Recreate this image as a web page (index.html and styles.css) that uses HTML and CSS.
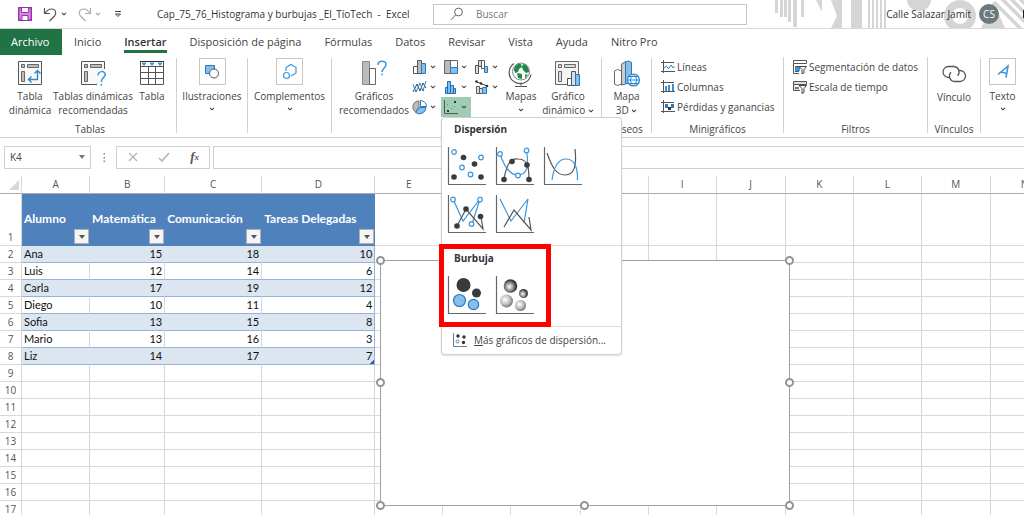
FILE: index.html
```html
<!DOCTYPE html>
<html lang="es">
<head>
<meta charset="utf-8">
<title>Cap_75_76_Histograma y burbujas _El_TíoTech - Excel</title>
<link rel="stylesheet" href="styles.css">
</head>
<body>
<svg class="defs" aria-hidden="true">
  <defs>
    <symbol id="chev" viewBox="0 0 6 4"><path d="M1 .8l2 2 2-2" fill="none" stroke="#444" stroke-width="1.1"/></symbol>
    <symbol id="axes" viewBox="0 0 40 40"><path d="M1.500 1v37.500H39" fill="none" stroke="#666" stroke-width="1.200"/></symbol>
    <radialGradient id="dark" cx=".42" cy=".55" r=".6"><stop offset="0" stop-color="#fff"/><stop offset=".45" stop-color="#999"/><stop offset=".8" stop-color="#3c3c3c"/><stop offset="1" stop-color="#333"/></radialGradient>
    <radialGradient id="light" cx=".4" cy=".4" r=".65"><stop offset="0" stop-color="#fff"/><stop offset=".5" stop-color="#c8c8c8"/><stop offset="1" stop-color="#6e6e6e"/></radialGradient>
  </defs>
</svg>

<header class="titlebar">
  <svg class="art" width="250" height="28" viewBox="0 0 250 28" aria-hidden="true">
    <g fill="#d5d5d5">
      <path d="M1 0h3v13h-3zM6 0h3v17h-3zM10 0h3v17h-3zM19 0h4v27h-4zM27 0h3v17h-3zM14 0h3v22h-3zM42 0h6v12zM57 0h11v28h-11l6-12zM77 0h11v28h-11z"/>
      <path d="M94 0h2v28h-2zM98 0h2v28h-2zM102 0h2v28h-2zM106 0h2v28h-2zM110 0h2v28h-2zM133 0h24a12 11 0 0 1-24 0z"/>
      <path d="M207 28l12-26 12 26z"/>
    </g>
    <circle cx="186" cy="16" r="12" fill="none" stroke="#d5d5d5" stroke-width="8"/>
    <path d="M225 -4l32 32M234 -4l32 32M243 -4l32 32M220 2l32 32" stroke="#d5d5d5" stroke-width="3.500"/>
  </svg>
  <div class="quick">
    <button class="plain" aria-label="Guardar"><svg width="14" height="14" viewBox="0 0 14 14"><path d="M.7.700h12.600v12.600H.7z" fill="#d58add" stroke="#9b2fae" stroke-width="1.400"/><path d="M3.500 1v4.500h7V1M4 13V8.500h6V13" fill="#fff" stroke="#9b2fae"/></svg></button>
    <button class="plain" aria-label="Deshacer"><svg width="15" height="15" viewBox="0 0 15 15"><path d="M1.500 1v5.500H7M1.800 6.200C4 3.500 6 2 8.500 2c4 0 5.500 4 3 7L6.500 14" fill="none" stroke="#555" stroke-width="1.200"/></svg></button>
    <button class="plain" aria-label="Opciones de deshacer"><svg width="6" height="4"><use href="#chev"/></svg></button>
    <button class="plain redo" aria-label="Rehacer"><svg width="15" height="15" viewBox="0 0 15 15"><path d="M13.500 1v5.500H8M13.200 6.200C11 3.500 9 2 6.500 2c-4 0-5.500 4-3 7L8.500 14" fill="none" stroke="#aaa" stroke-width="1.200"/></svg></button>
    <button class="plain" aria-label="Opciones de rehacer"><svg width="6" height="4" opacity=".5"><use href="#chev"/></svg></button>
    <button class="plain more" aria-label="Personalizar"><svg width="8" height="8" viewBox="0 0 8 8"><path d="M1 1.500h6M1.500 4h5L4 6.500z" fill="none" stroke="#444"/></svg></button>
  </div>
  <h1 class="doc">Cap_75_76_Histograma y burbujas _El_TíoTech&nbsp; -&nbsp; Excel</h1>
  <label class="search"><svg width="14" height="14" viewBox="0 0 14 14"><circle cx="8.500" cy="5" r="3.900" fill="none" stroke="#666"/><path d="M5.700 7.800L1 12.800" stroke="#666"/></svg><input type="search" placeholder="Buscar" aria-label="Buscar"></label>
  <div class="user"><span>Calle Salazar Jamit</span><span class="avatar">CS</span></div>
  <svg class="winbtn" width="4" height="10" viewBox="0 0 4 10" aria-hidden="true"><path d="M3.500 1v8" stroke="#222"/></svg>
</header>

<nav class="tabs">
  <button class="tab file">Archivo</button>
  <button class="tab">Inicio</button>
  <button class="tab active">Insertar</button>
  <button class="tab">Disposición de página</button>
  <button class="tab">Fórmulas</button>
  <button class="tab">Datos</button>
  <button class="tab">Revisar</button>
  <button class="tab">Vista</button>
  <button class="tab">Ayuda</button>
  <button class="tab">Nitro Pro</button>
</nav>

<section class="ribbon">
  <div class="group g-tables">
    <div class="items">
      <button class="big w52"><svg width="26" height="26" viewBox="0 0 26 26"><path d="M1.500 1.500h23v23h-23z" fill="#f8f8f8" stroke="#555"/><path d="M4.500 4.500h3v3h-3zM10.500 4.500h11v3h-11zM4.500 11.500h3v10h-3z" fill="#bbb" stroke="#666"/><path d="M12 19.500h8.500V11M17.500 13.500l3-3 3 3M14.500 16.500l-3 3 3 3" fill="none" stroke="#2b88d0" stroke-width="1.400"/></svg><span>Tabla<br>dinámica</span></button>
      <button class="big w76"><svg width="26" height="26" viewBox="0 0 26 26"><path d="M1.500 1.500h23v23h-23z" fill="#f8f8f8"/><path d="M24.500 9V1.500h-23v23H17" fill="none" stroke="#555"/><path d="M4.500 4.500h3v3h-3zM10.500 4.500h11v3h-11zM4.500 11.500h3v10h-3z" fill="#bbb" stroke="#666"/><path d="M18.500 16c0-5 7-5 7-1 0 3-4 3-4 7" fill="none" stroke="#fff" stroke-width="4"/><path d="M18 15.500c0-5 7.300-5 7.300-1 0 3-4 3-4 7.500M21.300 24v1.800" fill="none" stroke="#3a96dd" stroke-width="1.500"/></svg><span>Tablas dinámicas<br>recomendadas</span></button>
      <button class="big w40"><svg width="26" height="26" viewBox="0 0 26 26"><path d="M1.500 1.500h23v23h-23zM1.500 6.500h23M1.500 12.500h23M1.500 18.500h23M9.500 6.500v18M16.500 6.500v18" fill="none" stroke="#555"/><path d="M2 2h22v4H2z" fill="#fff"/><path d="M1 1.500h24" stroke="#333"/><path d="M3 3h4L5 5.500zM11 3h4l-2 2.500zM19 3h4l-2 2.500z" fill="#3a96dd" stroke="#3a96dd"/></svg><span>Tabla</span></button>
    </div>
    <div class="caption">Tablas</div>
  </div>
  <div class="group g-illus">
    <button class="boxed"><span class="box"><svg width="18" height="18" viewBox="0 0 18 18"><path d="M2.500 2.500h9v8h-9z" fill="#83beec" stroke="#2b78bb"/><circle cx="11" cy="10.500" r="4.500" fill="#fff" stroke="#555"/></svg></span><span>Ilustraciones</span><svg width="6" height="4"><use href="#chev"/></svg></button>
  </div>
  <div class="group g-addins">
    <button class="boxed"><span class="box"><svg width="18" height="18" viewBox="0 0 18 18"><path d="M5 8V4.500l5-3 5 3v5.500l-5 3" fill="none" stroke="#3a96dd" stroke-width="1.200"/><circle cx="5.500" cy="12.500" r="3" fill="none" stroke="#3a96dd" stroke-width="1.200"/></svg></span><span>Complementos</span><svg width="6" height="4"><use href="#chev"/></svg></button>
  </div>
  <div class="group g-charts">
    <div class="items">
      <button class="big w80"><svg width="26" height="26" viewBox="0 0 26 26"><path d="M1.500 1.500h7v23h-7z" fill="#bbb" stroke="#888"/><path d="M8.500 8.500h6v16h-6z" fill="#fff" stroke="#666"/><path d="M17 5c0-5 8-5 8-.5 0 3.500-4 4-4 7.500M21 13.500v1.800" fill="none" stroke="#3a96dd" stroke-width="1.500"/></svg><span>Gráficos<br>recomendados</span></button>
      <div class="mini">
        <button aria-label="Columnas"><svg width="16" height="16" viewBox="0 0 16 16"><path d="M1.500 7.500h4v7h-4z" fill="#fff" stroke="#555"/><path d="M5.500 1.500h4v13h-4z" fill="#bbb" stroke="#555"/><path d="M9.500 4.500h4v10h-4z" fill="#83beec" stroke="#2b78bb"/></svg><svg width="6" height="4"><use href="#chev"/></svg></button>
        <button aria-label="Jerarquía"><svg width="16" height="16" viewBox="0 0 16 16"><path d="M1.500 1.500h13v13h-13z" fill="#fff" stroke="#666"/><path d="M2 2h5v12H2z" fill="#bbb"/><path d="M7.500 1.500v13" stroke="#666"/><path d="M7.500 8.500h7v6h-7z" fill="#83beec" stroke="#2b78bb"/></svg><svg width="6" height="4"><use href="#chev"/></svg></button>
        <button aria-label="Cascada"><svg width="16" height="16" viewBox="0 0 16 16"><path d="M1.500 6.500h3v8h-3zM4.500 1.500h3v6h-3z" fill="#ddd" stroke="#555"/><path d="M7.500 1.500h3v8h-3z" fill="#fff" stroke="#555"/><path d="M10.500 7.500h3v6h-3z" fill="#83beec" stroke="#2b78bb"/></svg><svg width="6" height="4"><use href="#chev"/></svg></button>
        <button aria-label="Líneas"><svg width="16" height="16" viewBox="0 0 16 16"><path d="M1 13l4-8 3 7 3-8 3 5" fill="none" stroke="#444"/><path d="M1 5l3 8 4-9 3 8 3-10" fill="none" stroke="#2b88d0"/><path d="M3 11h2v2H3zM10 10h2v2h-2z" fill="#2b88d0"/></svg><svg width="6" height="4"><use href="#chev"/></svg></button>
        <button aria-label="Estadística"><svg width="16" height="16" viewBox="0 0 16 16"><path d="M2.500 8.500h2v6h-2zM4.500 2.500h3v12h-3zM7.500 6.500h3v8h-3zM10.500 9.500h2v5h-2z" fill="#83beec" stroke="#1d6fb5"/></svg><svg width="6" height="4"><use href="#chev"/></svg></button>
        <button aria-label="Combinado"><svg width="16" height="16" viewBox="0 0 16 16"><path d="M2.500 7.500h3v7h-3zM5.500 9.500h3v5h-3z" fill="#ddd" stroke="#555"/><path d="M8.500 8.500h4v6h-4z" fill="#83beec" stroke="#2b78bb"/><path d="M2 2.500l5 2 6 2.500" fill="none" stroke="#333"/><circle cx="2.500" cy="2.500" r="1.300" fill="#333"/><circle cx="7" cy="4.500" r="1.300" fill="#333"/><circle cx="13" cy="7" r="1.300" fill="#333"/></svg><svg width="6" height="4"><use href="#chev"/></svg></button>
        <button aria-label="Circular"><svg width="16" height="16" viewBox="0 0 16 16"><path d="M7 2a6 6 0 0 0-3.500 11L7 8z" fill="#bbb" stroke="#777"/><path d="M8.500 1.500V7.500h6a6 6 0 0 0-6-6z" fill="#fff" stroke="#2b78bb"/><path d="M14 8.500H7.500l-4 5A6.500 6.500 0 0 0 14 8.500z" fill="#83beec" stroke="#2b78bb"/></svg><svg width="6" height="4"><use href="#chev"/></svg></button>
        <div class="scatter">
          <button class="pressed" aria-label="Dispersión"><svg width="16" height="16" viewBox="0 0 16 16"><path d="M1.500 1v13.500H15" fill="none" stroke="#555"/><path d="M11 2h2v2h-2zM4 11h2v2H4z" fill="#333"/><path d="M4 5h1v1H4zM8 9h1v1H8zM11 7h1v1h-1z" fill="#3a96dd"/></svg><svg width="6" height="4"><use href="#chev"/></svg></button>
          <div class="menu">
            <h2>Dispersión</h2>
            <div class="gallery">
              <button aria-label="Dispersión simple"><svg width="40" height="40"><use href="#axes"/><g fill="#fff" stroke="#3a96dd" stroke-width="1.200"><circle cx="7" cy="6" r="2.300"/><circle cx="34" cy="11.500" r="2.300"/><circle cx="15" cy="21.500" r="2.300"/><circle cx="23.500" cy="28.500" r="2.300"/></g><g fill="#3a3a3a"><circle cx="16.500" cy="11.500" r="2.800"/><circle cx="27.500" cy="18" r="2.800"/><circle cx="7" cy="31" r="2.800"/><circle cx="34" cy="31" r="2.800"/></g></svg></button>
              <button aria-label="Líneas suavizadas y marcadores"><svg width="40" height="40"><use href="#axes"/><path d="M9 33C11 22 14 12 23 13c8 0 11 5 11 20" fill="none" stroke="#555" stroke-width="1.200"/><path d="M5 8c4 12 9 21 18 21S34 20 31.500 5" fill="none" stroke="#3a96dd" stroke-width="1.200"/><g fill="#fff" stroke="#3a96dd" stroke-width="1.200"><circle cx="5" cy="8" r="2.300"/><circle cx="31.500" cy="4.500" r="2.300"/><circle cx="23" cy="29.500" r="2.300"/></g><g fill="#3a3a3a"><circle cx="9" cy="33.500" r="2.800"/><circle cx="17" cy="15.500" r="2.800"/><circle cx="32" cy="19" r="2.800"/><circle cx="34" cy="33.500" r="2.800"/></g></svg></button>
              <button aria-label="Líneas suavizadas"><svg width="40" height="40"><use href="#axes"/><path d="M4 7c5 14 9 22 18 22S34 20 32 3" fill="none" stroke="#555" stroke-width="1.200"/><path d="M9 34C11 20 15 13 23 13s12 8 11.500 21" fill="none" stroke="#3a96dd" stroke-width="1.200"/></svg></button>
              <button aria-label="Líneas rectas y marcadores"><svg width="40" height="40"><use href="#axes"/><path d="M6 5l10 22L33 5l-8 25" fill="none" stroke="#3a96dd" stroke-width="1.200"/><path d="M10 32l9-17 17 20-2-12" fill="none" stroke="#555" stroke-width="1.200"/><g fill="#fff" stroke="#3a96dd" stroke-width="1.200"><circle cx="6" cy="5.500" r="2.300"/><circle cx="33" cy="5.500" r="2.300"/><circle cx="24.500" cy="30" r="2.300"/></g><g fill="#3a3a3a"><circle cx="10" cy="32" r="2.800"/><circle cx="19" cy="15" r="2.800"/><circle cx="33.500" cy="22.500" r="2.800"/></g></svg></button>
              <button aria-label="Líneas rectas"><svg width="40" height="40"><use href="#axes"/><path d="M5 5l11 22L33 5l-4 24" fill="none" stroke="#3a96dd" stroke-width="1.200"/><path d="M9 33l10-17 17 20-2-13" fill="none" stroke="#555" stroke-width="1.200"/></svg></button>
            </div>
            <div class="bubble">
              <h2>Burbuja</h2>
              <div class="gallery">
                <button aria-label="Burbuja"><svg width="40" height="40"><use href="#axes"/><circle cx="16.500" cy="10" r="7" fill="#3a3a3a"/><circle cx="29.500" cy="18" r="4.500" fill="#3a3a3a"/><circle cx="12.500" cy="25.500" r="6" fill="#83beec" stroke="#2b78bb" stroke-width="1.200"/><circle cx="26.500" cy="29.500" r="5.200" fill="#83beec" stroke="#2b78bb" stroke-width="1.200"/></svg></button>
                <button aria-label="Burbuja 3D"><svg width="40" height="40"><use href="#axes"/><circle cx="15.500" cy="11" r="6.800" fill="url(#dark)"/><circle cx="28.500" cy="18.500" r="4.500" fill="url(#dark)"/><circle cx="11.500" cy="26" r="6.500" fill="url(#light)"/><circle cx="25.500" cy="30.500" r="5.500" fill="url(#light)"/></svg></button>
              </div>
              <div class="highlight"></div>
            </div>
            <button class="moreitem"><svg width="16" height="16" viewBox="0 0 16 16"><path d="M1.500 1v13.500H15" fill="none" stroke="#777"/><g fill="#333"><circle cx="6" cy="4" r="1.700"/><circle cx="12" cy="5" r="1.700"/><circle cx="11.500" cy="10.500" r="1.700"/></g><circle cx="5.500" cy="9.500" r="1.500" fill="#fff" stroke="#3a96dd"/></svg><span><u>M</u>ás gráficos de dispersión...</span></button>
          </div>
        </div>
      </div>
      <button class="big w36 maps"><svg width="26" height="28" viewBox="0 0 26 28"><circle cx="13" cy="11.500" r="8.500" fill="#fff" stroke="#888"/><path d="M6 10c0-4 4-7 7-6l1 3-3 2-1 3-3 1zM15 4c3 0 6 3 6 8l-3 1-3-3-1-3zM9 13l5 1 0 5-4-1zM17 14.500l3 0-3 4z" fill="#1f8a4c"/><path d="M6 3.500a11 11 0 1 0 17 11M13 22.500v3M7 26.500h12" fill="none" stroke="#555" stroke-width="1.200"/></svg><span>Mapas</span><svg class="drop" width="6" height="4"><use href="#chev"/></svg></button>
      <button class="big w58"><svg width="28" height="28" viewBox="0 0 28 28"><path d="M1.500 1.500h23v23h-23z" fill="#f4f4f4" stroke="#666"/><path d="M4.500 4.500h3v3h-3zM10.500 4.500h11v3h-11zM4.500 11.500h3v10h-3z" fill="#ddd" stroke="#666"/><path d="M13.500 18.500h4v7h-4z" fill="#fff" stroke="#555"/><path d="M17.500 11.500h4v14h-4z" fill="#ddd" stroke="#555"/><path d="M21.500 14.500h4v11h-4z" fill="#83beec" stroke="#2b78bb"/></svg><span>Gráfico<br>dinámico <svg width="6" height="4"><use href="#chev"/></svg></span></button>
    </div>
  </div>
  <div class="group g-tours">
    <div class="items">
      <button class="big w48"><svg width="28" height="28" viewBox="0 0 28 28"><path d="M1.500 11l3-1.500 4 1.500v13l-4 1.500-3-1.500z" fill="#fff" stroke="#666"/><path d="M8.500 4l4-2.500V24l-4 1z" fill="#ccc" stroke="#666"/><path d="M12.500 2l3-1 3 1.500V22l-6 2z" fill="#83beec" stroke="#2b78bb"/><circle cx="20.500" cy="20" r="6" fill="#fff" stroke="#2b88d0" stroke-width="1.200"/><path d="M14.500 20h12M16 16.500h9M16 23.500h9M20.500 14c-4 4-4 8 0 12 4-4 4-8 0-12z" fill="none" stroke="#2b88d0"/></svg><span>Mapa<br>3D <svg width="6" height="4"><use href="#chev"/></svg></span></button>
    </div>
    <div class="caption">Paseos</div>
  </div>
  <div class="group g-spark">
    <div class="list">
      <button><svg width="14" height="14" viewBox="0 0 14 14"><path d="M0 2.500h13M0 11.500h14M2.500 0v13" stroke="#555"/><path d="M3 8l2.500-2 2 3 2.500-4 2 3 1.500-2" fill="none" stroke="#2b88d0"/></svg>Líneas</button>
      <button><svg width="14" height="14" viewBox="0 0 14 14"><path d="M0 2.500h13M0 11.500h14M2.500 0v13" stroke="#555"/><path d="M4 6h2v5H4zM7 5h2v6H7zM11 4h2v7h-2z" fill="#3a8fd4"/></svg>Columnas</button>
      <button><svg width="14" height="14" viewBox="0 0 14 14"><path d="M0 2.500h13M0 11.500h14M2.500 0v13" stroke="#555"/><path d="M4 4h3v4H4zM10 4h3v4h-3z" fill="#2b78bb"/><path d="M7 7h3v3H7z" fill="#333"/></svg>Pérdidas y ganancias</button>
    </div>
    <div class="caption">Minigráficos</div>
  </div>
  <div class="group g-filters">
    <div class="list">
      <button><svg width="14" height="14" viewBox="0 0 14 14"><path d="M.5.500h13v3H.5zM.5 3.500v10H6M2 6.500h6M2 11.500h4" fill="none" stroke="#555"/><path d="M2 7h5v4H2z" fill="#3a96dd"/><path d="M6 6.500h7.500L11 9.500v3.500l-2 1V9.500z" fill="#fff" stroke="#444"/></svg>Segmentación de datos</button>
      <button><svg width="14" height="14" viewBox="0 0 14 14"><path d="M.5 1.500h13v3H.5zM.5 4.500v6H7" fill="#ddd" stroke="#555"/><path d="M2 7h4v2H2z" fill="#777"/><path d="M6 5.500h7.500L11 8.500v4l-2 1V8.500z" fill="#fff" stroke="#444"/></svg>Escala de tiempo</button>
    </div>
    <div class="caption">Filtros</div>
  </div>
  <div class="group g-links">
    <div class="items">
      <button class="big w52 link"><svg width="26" height="26" viewBox="0 0 26 26"><path d="M9 16.500H7.500a5.500 5.500 0 0 1 0-11h5a5.500 5.500 0 0 1 4 9.300" fill="none" stroke="#555" stroke-width="1.300"/><path d="M17 9.500h2a5.500 5.500 0 0 1 0 11h-5a5.500 5.500 0 0 1-4-9.300" fill="none" stroke="#555" stroke-width="1.300"/></svg><span>Vínculo</span></button>
    </div>
    <div class="caption">Vínculos</div>
  </div>
  <div class="group g-text">
    <button class="boxed"><span class="box"><svg width="18" height="18" viewBox="0 0 18 18"><path d="M4 11.500L14 3l-2 11.500M7 9l6 1.500" fill="none" stroke="#3a96dd" stroke-width="1.600"/></svg></span><span>Texto</span><svg width="6" height="4"><use href="#chev"/></svg></button>
  </div>
</section>

<section class="formula">
  <div class="namebox"><input type="text" value="K4" aria-label="Cuadro de nombres"><button class="plain" aria-label="Nombres"><svg width="6" height="4" viewBox="0 0 6 4"><path d="M0 0h6L3 4z" fill="#777"/></svg></button></div>
  <svg width="3" height="9" viewBox="0 0 3 9" aria-hidden="true"><path d="M.5 0h1.500v1.500H.5zM.5 4h1.500v1.500H.5zM.5 7.500h1.500V9H.5z" fill="#888"/></svg>
  <div class="fxbox">
    <button class="plain" aria-label="Cancelar"><svg width="10" height="10" viewBox="0 0 10 10"><path d="M1 1l8 8M9 1L1 9" stroke="#b5b5b5" stroke-width="1.300"/></svg></button>
    <button class="plain" aria-label="Introducir"><svg width="12" height="10" viewBox="0 0 12 10"><path d="M1 6l3 3 7-8" fill="none" stroke="#b5b5b5" stroke-width="1.600"/></svg></button>
    <button class="plain fx" aria-label="Insertar función"><i>f</i><sub>x</sub></button>
  </div>
  <input class="bar" type="text" aria-label="Barra de fórmulas">
</section>

<main class="sheet">
  <table>
    <colgroup><col class="c-num"><col class="c-a"><col class="c-b"><col class="c-c"><col class="c-d"><col class="c68"><col class="c68"><col class="c69"><col class="c68"><col class="c68"><col class="c69"><col class="c68"><col class="c68"><col class="c69"><col class="c68"></colgroup>
    <thead><tr><th class="corner"><svg width="10" height="10" viewBox="0 0 10 10"><path d="M10 0v10H0z" fill="#d8d8d8"/></svg></th><th>A</th><th>B</th><th>C</th><th>D</th><th>E</th><th>F</th><th>G</th><th>H</th><th>I</th><th>J</th><th>K</th><th>L</th><th>M</th><th>N</th></tr></thead>
    <tbody>
      <tr class="head"><th>1</th>
        <td><div class="hd"><span>Alumno</span><button aria-label="Filtrar Alumno"><svg width="6" height="4" viewBox="0 0 6 4"><path d="M0 0h6L3 4z" fill="#555"/></svg></button></div></td>
        <td><div class="hd"><span>Matemática</span><button aria-label="Filtrar Matemática"><svg width="6" height="4" viewBox="0 0 6 4"><path d="M0 0h6L3 4z" fill="#555"/></svg></button></div></td>
        <td><div class="hd"><span>Comunicación</span><button aria-label="Filtrar Comunicación"><svg width="6" height="4" viewBox="0 0 6 4"><path d="M0 0h6L3 4z" fill="#555"/></svg></button></div></td>
        <td><div class="hd"><span>Tareas Delegadas</span><button aria-label="Filtrar Tareas Delegadas"><svg width="6" height="4" viewBox="0 0 6 4"><path d="M0 0h6L3 4z" fill="#555"/></svg></button></div></td>
        <td></td><td></td><td></td><td></td><td></td><td></td><td></td><td></td><td></td><td></td></tr>
      <tr class="data band"><th>2</th><td>Ana</td><td>15</td><td>18</td><td>10</td><td></td><td></td><td></td><td></td><td></td><td></td><td></td><td></td><td></td><td></td></tr>
      <tr class="data"><th>3</th><td>Luis</td><td>12</td><td>14</td><td>6</td><td></td><td></td><td></td><td></td><td></td><td></td><td></td><td></td><td></td><td></td></tr>
      <tr class="data band"><th>4</th><td>Carla</td><td>17</td><td>19</td><td>12</td><td></td><td></td><td></td><td></td><td></td><td></td><td></td><td></td><td></td><td></td></tr>
      <tr class="data"><th>5</th><td>Diego</td><td>10</td><td>11</td><td>4</td><td></td><td></td><td></td><td></td><td></td><td></td><td></td><td></td><td></td><td></td></tr>
      <tr class="data band"><th>6</th><td>Sofia</td><td>13</td><td>15</td><td>8</td><td></td><td></td><td></td><td></td><td></td><td></td><td></td><td></td><td></td><td></td></tr>
      <tr class="data"><th>7</th><td>Mario</td><td>13</td><td>16</td><td>3</td><td></td><td></td><td></td><td></td><td></td><td></td><td></td><td></td><td></td><td></td></tr>
      <tr class="data band last"><th>8</th><td>Liz</td><td>14</td><td>17</td><td>7</td><td></td><td></td><td></td><td></td><td></td><td></td><td></td><td></td><td></td><td></td></tr>
      <tr><th>9</th><td></td><td></td><td></td><td></td><td></td><td></td><td></td><td></td><td></td><td></td><td></td><td></td><td></td><td></td></tr>
      <tr><th>10</th><td></td><td></td><td></td><td></td><td></td><td></td><td></td><td></td><td></td><td></td><td></td><td></td><td></td><td></td></tr>
      <tr><th>11</th><td></td><td></td><td></td><td></td><td></td><td></td><td></td><td></td><td></td><td></td><td></td><td></td><td></td><td></td></tr>
      <tr><th>12</th><td></td><td></td><td></td><td></td><td></td><td></td><td></td><td></td><td></td><td></td><td></td><td></td><td></td><td></td></tr>
      <tr><th>13</th><td></td><td></td><td></td><td></td><td></td><td></td><td></td><td></td><td></td><td></td><td></td><td></td><td></td><td></td></tr>
      <tr><th>14</th><td></td><td></td><td></td><td></td><td></td><td></td><td></td><td></td><td></td><td></td><td></td><td></td><td></td><td></td></tr>
      <tr><th>15</th><td></td><td></td><td></td><td></td><td></td><td></td><td></td><td></td><td></td><td></td><td></td><td></td><td></td><td></td></tr>
      <tr><th>16</th><td></td><td></td><td></td><td></td><td></td><td></td><td></td><td></td><td></td><td></td><td></td><td></td><td></td><td></td></tr>
      <tr><th>17</th><td></td><td></td><td></td><td></td><td></td><td></td><td></td><td></td><td></td><td></td><td></td><td></td><td></td><td></td></tr>
    </tbody>
  </table>
  <div class="chart"><i class="h nw"></i><i class="h ne"></i><i class="h w"></i><i class="h e"></i><i class="h sw"></i><i class="h s"></i><i class="h se"></i></div>
</main>
</body>
</html>
```
FILE: styles.css
```css
* { box-sizing: border-box; }
body {
  margin: 0;
  height: 100vh;
  overflow: hidden;
  display: flex;
  flex-direction: column;
  background: #fff;
  color: #444;
  font: 10px/14px "Open Sans", "Noto Sans", sans-serif;
}
button, input { font: inherit; color: inherit; background: none; border: 0; padding: 0; margin: 0; outline: 0; }
svg { display: block; flex: none; }
.defs { position: absolute; width: 0; height: 0; }
.plain { display: flex; align-items: center; justify-content: center; }

.titlebar {
  position: relative;
  flex: none;
  display: flex;
  align-items: center;
  height: 29px;
  border-bottom: 1px solid #d8d8d8;
  color: #333;
}
.art { position: absolute; right: 0; top: 0; z-index: -1; }
.quick { display: flex; align-items: center; padding-left: 18px; width: 157px; }
.quick button:nth-child(2) { margin-left: 11px; }
.quick button:nth-child(3) { margin-left: 3px; }
.quick .redo { margin-left: 10px; }
.quick .redo + button { margin-left: 3px; }
.quick .more { margin-left: 13px; }
.doc { margin: 0; font-size: 10px; font-weight: 400; width: 276px; white-space: nowrap; }
.search {
  display: flex;
  align-items: center;
  gap: 12px;
  flex: 0 1 314px;
  height: 21px;
  padding-left: 16px;
  border: 1px solid #c6c6c6;
  background: #fff;
}
.search input { flex: 1; min-width: 0; }
.search input::placeholder { color: #777; opacity: 1; }
.user { display: flex; align-items: center; gap: 8px; margin-left: auto; margin-right: 25px; }
.avatar { width: 20px; height: 20px; line-height: 20px; border-radius: 50%; background: #69797e; color: #fff; text-align: center; }
.winbtn { position: absolute; right: 0; top: 9px; }

.tabs { display: flex; gap: 1px; flex: none; height: 26px; font-size: 11px; }
.tab { padding: 0 11px; white-space: nowrap; display: flex; align-items: center; }
.file { background: #217346; color: #fff; width: 62px; font-weight: 500; }
.active { position: relative; color: #333; font-weight: 600; }
.active::after { content: ""; position: absolute; left: 11px; right: 11px; bottom: 2px; height: 3px; background: #217346; }

.ribbon { display: flex; flex: none; height: 83px; padding: 3px 0 4px; border-bottom: 1px solid #d2d2d2; }
.group { flex: none; display: flex; flex-direction: column; border-right: 1px solid #d0d0d0; }
.group:last-child { border-right: 0; }
.g-tables { width: 177px; padding-left: 4px; }
.g-illus { width: 71px; }
.g-addins { width: 84px; }
.g-charts { width: 270px; }
.g-tours { width: 50px; }
.g-spark { width: 132px; }
.g-filters { width: 144px; }
.g-links { width: 53px; }
.g-text { width: 43px; }
.items { display: flex; flex: 1; }
.caption { text-align: center; margin-bottom: -3px; }
.big { display: flex; flex-direction: column; align-items: center; padding-top: 2px; white-space: nowrap; }
.big > svg { margin-bottom: 3px; }
.big span { display: block; text-align: center; }
.big span svg { display: inline-block; vertical-align: middle; }
.big svg[width="28"], .maps > svg[height="28"] { margin-bottom: 1px; }
.maps .drop { margin-top: 5px; }
.link { padding-top: 3px; }
.w52 { width: 52px; }
.w76 { width: 74px; }
.w40 { width: 44px; }
.w36 { width: 36px; }
.w58 { width: 58px; }
.w48 { width: 49px; }
.w80 { width: 78px; padding-left: 6px; }
.boxed { display: flex; flex-direction: column; align-items: center; gap: 4px; }
.box { display: flex; align-items: center; justify-content: center; width: 27px; height: 27px; border: 1px solid #c6c6c6; }
.mini { display: grid; grid-template-columns: repeat(3, 31px); grid-auto-rows: 20px; margin-top: -1px; width: 93px; }
.mini button { display: flex; align-items: center; gap: 2px; padding-left: 2px; }
.scatter { position: relative; }
.mini .pressed { width: 30px; height: 20px; background: #9fcdb3; }

.menu {
  position: absolute;
  z-index: 5;
  top: 20px;
  left: 0;
  width: 181px;
  padding: 4px 0;
  background: #fff;
  border: 1px solid #d0d0d0;
  border-radius: 4px;
  box-shadow: 0 1px 2px #0002;
}
.menu h2 { margin: 0; padding-left: 12px; font-size: 10px; line-height: 14px; font-weight: 700; color: #333; }
.gallery { display: grid; grid-template-columns: repeat(3, 48px); grid-auto-rows: 48px; padding: 6px 0 0 4px; }
.mini .gallery button { display: block; padding: 1px; }
.bubble { position: relative; margin-top: 7px; padding-top: 5px; border-top: 1px solid #dcdcdc; border-bottom: 1px solid #dcdcdc; height: 82px; }
.highlight { position: absolute; left: -3px; top: -2px; width: 112px; height: 83px; border: 5px solid #f00; }
.mini .moreitem { width: 100%; height: 23px; gap: 6px; padding: 2px 0 0 10px; white-space: nowrap; }

.list { flex: 1; padding-left: 9px; display: flex; flex-direction: column; }
.list button { display: flex; align-items: center; gap: 2px; height: 20px; white-space: nowrap; }
.g-spark, .g-filters { margin-top: -1px; }

.formula { display: flex; flex: none; align-items: center; height: 38px; }
.namebox, .fxbox, .bar { height: 23px; border: 1px solid #d0d0d0; background: #fff; }
.namebox { display: flex; width: 87px; margin-left: 4px; padding: 0 5px; margin-right: 12px; }
.namebox input { flex: 1; min-width: 0; }
.fxbox { display: flex; align-items: center; justify-content: space-between; width: 94px; margin: 0 3px 0 10px; padding: 0 10px 0 11px; }
.fx { font: 700 13px/16px "Liberation Serif", serif; color: #555; }
.fx sub { font-size: 9px; font-style: italic; }
.bar { flex: 1; min-width: 0; border-right: 0; }

.sheet { position: relative; flex: 1; overflow: hidden; }
table { table-layout: fixed; width: 1059px; border-collapse: separate; border-spacing: 0; }
.c-num { width: 22px; }
.c-a { width: 68px; }
.c-b { width: 75px; }
.c-c { width: 97px; }
.c-d { width: 113px; }
.c68 { width: 68px; }
.c69 { width: 69px; }
th, td { height: 17px; padding: 0; border: 0 solid #d8d8d8; border-width: 0 1px 1px 0; line-height: 16px; font-weight: 400; }
td { font-family: Lato, "Open Sans", sans-serif; font-size: 11px; color: #111; }
th { color: #555; }
thead th { height: 18px; line-height: 17px; border-bottom-color: #ababab; }
.corner svg { margin: 2px 2px 2px auto; }
.head td { height: 52px; }
.head th { vertical-align: bottom; }
.head td:nth-child(-n+5) { background: #4f81bd; border-color: #4f81bd; }
.hd { display: flex; flex-direction: column; height: 51px; padding: 17px 0 0 2px; color: #fff; font-size: 12px; font-weight: 700; white-space: nowrap; }
.hd button { align-self: flex-end; display: flex; align-items: center; justify-content: center; width: 15px; height: 15px; margin-top: 2px; background: #f5f5f5; border: 1px solid #b0b0b0; }
.data td:nth-child(-n+5) { border-bottom-color: #95b3d7; text-align: right; padding-right: 2px; }
.data td:nth-child(2) { text-align: left; padding-left: 2px; }
.band td:nth-child(-n+5) { background: #dce6f1; border-right-color: #dce6f1; }
.data td:nth-child(5) { border-right-color: #95b3d7; }
.last td:nth-child(5) { background: linear-gradient(135deg, transparent 50%, #3f5fb5 50%) right bottom / 4px 4px no-repeat #dce6f1; }

.chart { position: absolute; left: 380px; top: 84px; width: 410px; height: 246px; background: #fff; border: 1px solid #a0a0a0; }
.h { position: absolute; width: 9px; height: 9px; border: 2px solid #949494; border-radius: 50%; background: #fff; }
.nw, .w, .sw { left: -5px; }
.ne, .e, .se { right: -5px; }
.nw, .ne { top: -5px; }
.w, .e { top: 117px; }
.sw, .s, .se { bottom: -5px; }
.s { left: 199px; }
```
